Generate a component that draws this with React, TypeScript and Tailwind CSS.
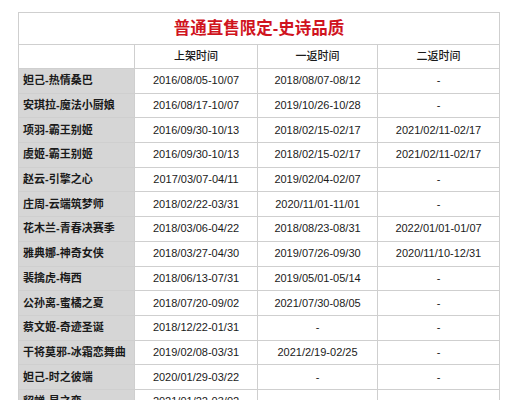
import React from "react";

const rows: [string, string, string, string][] = [
  ["妲己-热情桑巴", "2016/08/05-10/07", "2018/08/07-08/12", "-"],
  ["安琪拉-魔法小厨娘", "2016/08/17-10/07", "2019/10/26-10/28", "-"],
  ["项羽-霸王别姬", "2016/09/30-10/13", "2018/02/15-02/17", "2021/02/11-02/17"],
  ["虞姬-霸王别姬", "2016/09/30-10/13", "2018/02/15-02/17", "2021/02/11-02/17"],
  ["赵云-引擎之心", "2017/03/07-04/11", "2019/02/04-02/07", "-"],
  ["庄周-云端筑梦师", "2018/02/22-03/31", "2020/11/01-11/01", "-"],
  ["花木兰-青春决赛季", "2018/03/06-04/22", "2018/08/23-08/31", "2022/01/01-01/07"],
  ["雅典娜-神奇女侠", "2018/03/27-04/30", "2019/07/26-09/30", "2020/11/10-12/31"],
  ["裴擒虎-梅西", "2018/06/13-07/31", "2019/05/01-05/14", "-"],
  ["公孙离-蜜橘之夏", "2018/07/20-09/02", "2021/07/30-08/05", "-"],
  ["蔡文姬-奇迹圣诞", "2018/12/22-01/31", "-", "-"],
  ["干将莫邪-冰霜恋舞曲", "2019/02/08-03/31", "2021/2/19-02/25", "-"],
  ["妲己-时之彼端", "2020/01/29-03/22", "-", "-"],
  ["貂蝉-星之恋", "2021/01/22-03/02", "-", "-"],
];

const font = { fontFamily: '"Liberation Sans", "Noto Sans CJK SC", sans-serif' };

export default function App() {
  return (
    <div className="w-[514px] h-[400px] overflow-hidden bg-white text-[#1a1a1a]" style={font}>
      <div className="ml-[18px] mt-[12px] w-[482px] border-l border-t border-[#cfcfcf]">
        <div className="h-[32px] flex items-center justify-center border-r border-b border-[#cfcfcf] text-[16.5px] font-semibold text-[#d0141e] leading-none">
          普通直售限定-史诗品质
        </div>
        <div className="grid grid-cols-[116px_123px_120px_122px] text-[11px] leading-none">
          <div className="h-[24px] border-r border-b border-[#cfcfcf]" />
          <div className="h-[24px] border-r border-b border-[#cfcfcf] flex items-center justify-center font-medium">上架时间</div>
          <div className="h-[24px] border-r border-b border-[#cfcfcf] flex items-center justify-center font-medium">一返时间</div>
          <div className="h-[24px] border-r border-b border-[#cfcfcf] flex items-center justify-center font-medium">二返时间</div>
          {rows.map((r, i) => (
            <React.Fragment key={i}>
              <div className="h-[24.7px] border-r border-b border-[#cfcfcf] bg-[#d6d6d6] flex items-center pl-[4px] font-semibold whitespace-nowrap">
                {r[0]}
              </div>
              <div className="h-[24.7px] border-r border-b border-[#cfcfcf] flex items-center justify-center">{r[1]}</div>
              <div className="h-[24.7px] border-r border-b border-[#cfcfcf] flex items-center justify-center">{r[2]}</div>
              <div className="h-[24.7px] border-r border-b border-[#cfcfcf] flex items-center justify-center">{r[3]}</div>
            </React.Fragment>
          ))}
        </div>
      </div>
    </div>
  );
}
